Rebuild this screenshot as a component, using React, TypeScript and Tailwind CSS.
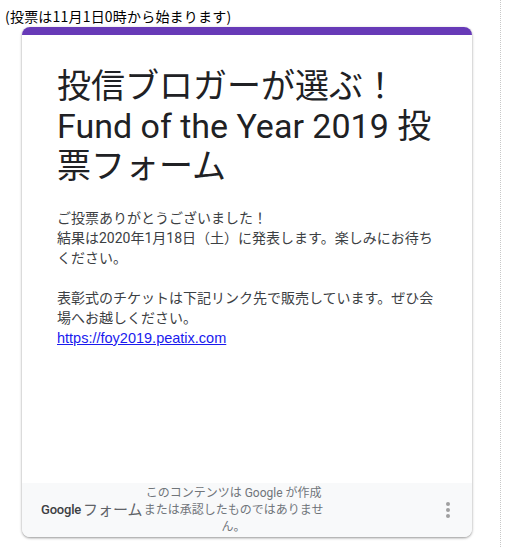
import React from "react";

const sans = "font-['Roboto','Noto_Sans_CJK_JP',sans-serif]";

export default function App() {
  return (
    <div className="relative min-h-[547px] bg-white text-[#202124]">
      {/* dotted divider on the right */}
      <div className="absolute top-0 bottom-0 left-[500px] border-l border-dotted border-[#c8c8c8]" />

      <div className="pl-[5px] pt-[6px] text-[14px] leading-[20px] tracking-[0.2px] text-black font-['Noto_Sans_CJK_JP',sans-serif]">
        (投票は11月1日0時から始まります)
      </div>

      <div className="ml-[22px] mt-[1px] w-[450px] overflow-hidden rounded-lg bg-white shadow-[0_1px_3px_rgba(0,0,0,0.3),0_1px_2px_rgba(0,0,0,0.15)]">
        <div className="h-[8px] bg-[#673ab7]" />

        <div className={`h-[448px] px-[35px] pt-[31px] ${sans}`}>
          <h1 className="text-[34px] leading-[40px] font-normal text-[#202124]">
            投信ブロガーが選ぶ！Fund of the Year 2019 投票フォーム
          </h1>
          <div className="mt-[22px] text-[14px] leading-[20px] text-[#3c4043]">
            <p>ご投票ありがとうございました！</p>
            <p>結果は2020年1月18日（土）に発表します。楽しみにお待ちください。</p>
            <p>&nbsp;</p>
            <p>表彰式のチケットは下記リンク先で販売しています。ぜひ会場へお越しください。</p>
            <a
              href="#"
              className="text-[#1a1aee] underline text-[14.5px] font-['Liberation_Sans',Arial,sans-serif]"
            >
              https://foy2019.peatix.com
            </a>
          </div>
        </div>

        <div className={`flex h-[54px] items-center bg-[#f8f9fa] pl-[19px] pr-[22px] ${sans}`}>
          <div className="flex items-center">
            <span className="text-[13px] font-medium text-[#3c4043] tracking-[-0.2px]">Google</span>
            <span className="ml-[2px] text-[15px] text-[#5f6368]">フォーム</span>
          </div>
          <div className="w-[182px] text-center text-[12px] leading-[17px] text-[#70757a]">
            このコンテンツは Google が作成または承認したものではありません。
          </div>
          <div className="ml-auto flex flex-col gap-[2px]">
            <span className="h-[4px] w-[4px] rounded-full bg-[#a0a0a0]" />
            <span className="h-[4px] w-[4px] rounded-full bg-[#a0a0a0]" />
            <span className="h-[4px] w-[4px] rounded-full bg-[#a0a0a0]" />
          </div>
        </div>
      </div>
    </div>
  );
}
